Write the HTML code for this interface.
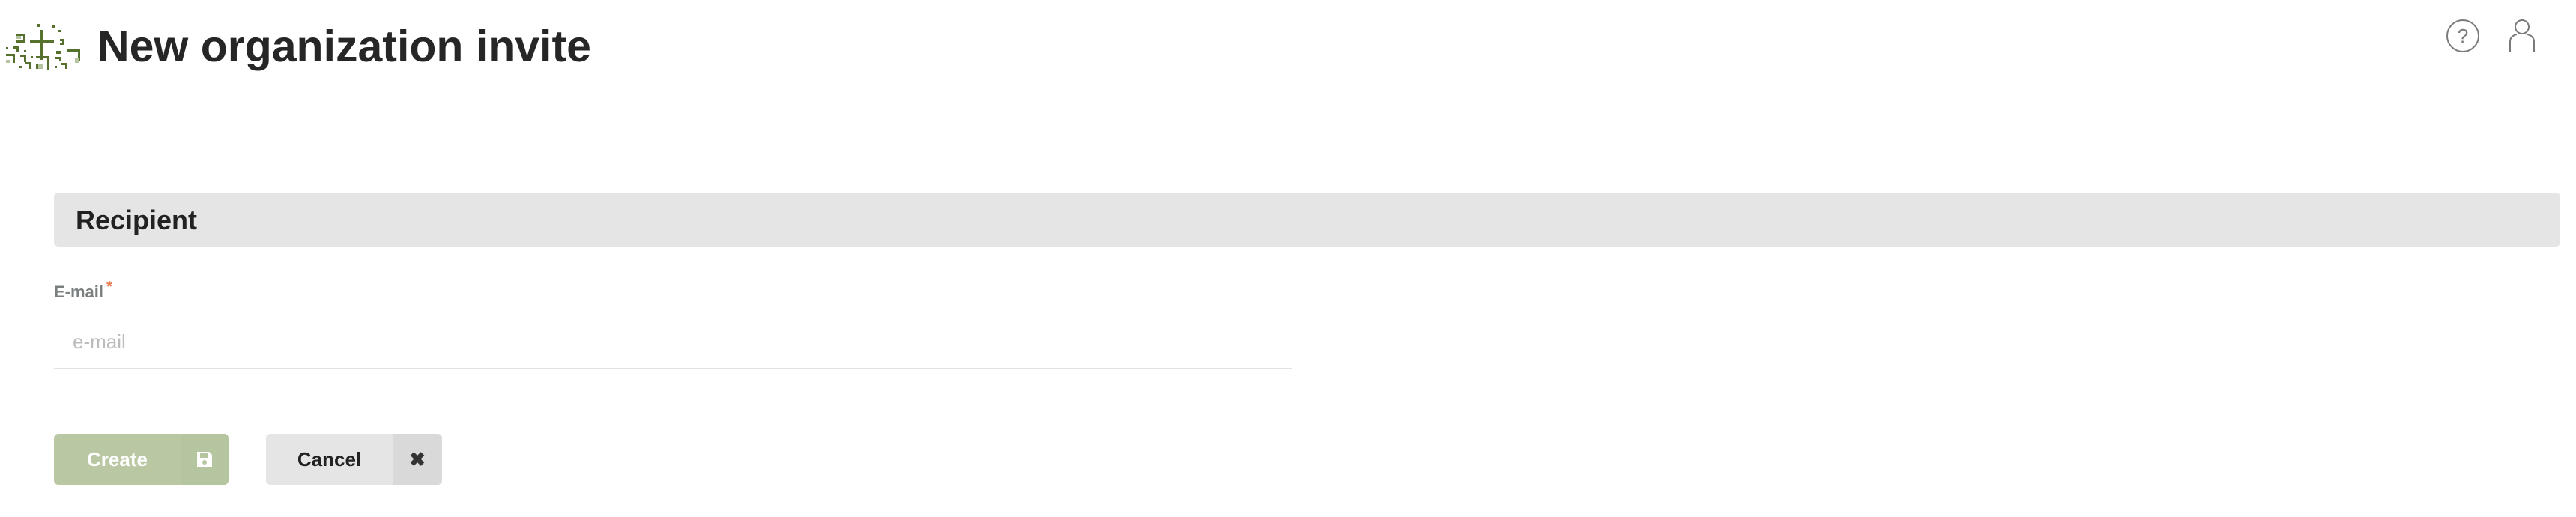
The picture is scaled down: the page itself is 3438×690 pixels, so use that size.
<!DOCTYPE html>
<html><head><meta charset="utf-8"><style>
html,body{margin:0;padding:0;background:#fff;width:3438px;height:690px;overflow:hidden;font-family:"Liberation Sans",sans-serif;}
.t{position:absolute;left:130px;top:28px;font-size:59px;font-weight:bold;color:#262626;letter-spacing:0;}
.bar{position:absolute;left:72px;top:257px;width:3345px;height:72px;background:#e5e5e5;border-radius:6px;}
.bar span{position:absolute;left:29px;top:16px;font-size:36px;font-weight:bold;color:#222;}
.lbl{position:absolute;left:72px;top:377px;font-size:22px;font-weight:bold;color:#7a7f7f;}
.lbl b{color:#e8794a;font-size:20px;position:relative;top:-8px;left:4px;}
.ph{position:absolute;left:97px;top:441px;font-size:26px;color:#bcbcbc;}
.ul{position:absolute;left:72px;top:491px;width:1652px;height:2px;background:#e2e2e2;}
.btn{position:absolute;top:579px;height:68px;border-radius:6px;overflow:hidden;font-size:26px;font-weight:bold;}
.btn .l{position:absolute;left:0;top:0;bottom:0;display:flex;align-items:center;justify-content:center;}
.btn .r{position:absolute;top:0;bottom:0;right:0;display:flex;align-items:center;justify-content:center;}
</style></head><body>
<svg style="position:absolute;left:0;top:20px" width="120" height="80" viewBox="0 0 120 80" fill="#56702e">
<rect x="53" y="20" width="4" height="40"/><rect x="40" y="33" width="32" height="4"/>
<rect x="50" y="12" width="4" height="4"/><rect x="70" y="14" width="3" height="3"/><rect x="78" y="20" width="3" height="3"/>
<path d="M22 25h12v12h-12v-3h9v-6h-9z"/><path d="M80 32h6v8h-6v-3h3v-2h-3z"/>
<rect x="8" y="43" width="3" height="3"/><path d="M17 42h8v8h-3v-5h-5z"/><rect x="32" y="47" width="3" height="3"/>
<path d="M8 52h12v12h-3v-9h-9z"/><path d="M27 53h8v10h-3v-7h-5z"/><rect x="41" y="55" width="3" height="3"/>
<path d="M48 55h18v18h-3v-15h-15z"/><path d="M75 48h6v4h-6z"/><path d="M74 56h8v6h-3v-3h-5z"/>
<path d="M89 46h18v16h-3v-13h-15z"/><path d="M82 64h8v8h-3v-5h-5z"/><path d="M33 63h9v9h-3v-6h-6z"/>
<rect x="26" y="68" width="3" height="3"/><rect x="73" y="68" width="3" height="3"/><rect x="48" y="66" width="3" height="6"/>
<g fill="#b7c4a4"><rect x="8" y="60" width="6" height="4"/><rect x="22" y="28" width="6" height="4"/><rect x="100" y="58" width="6" height="6"/><rect x="51" y="66" width="6" height="6"/></g>
</svg>
<div class="t">New organization invite</div>
<svg style="position:absolute;left:3264px;top:25px" width="46" height="46" viewBox="0 0 46 46"><circle cx="23" cy="23" r="21" fill="none" stroke="#7a7a7a" stroke-width="2"/><text x="23" y="32" font-size="26" text-anchor="middle" fill="#7a7a7a" font-family="Liberation Sans">?</text></svg>
<svg style="position:absolute;left:3348px;top:24px" width="36" height="48" viewBox="0 0 36 48"><circle cx="18" cy="12" r="9" fill="none" stroke="#7a7a7a" stroke-width="2"/><path d="M2 46V32q0-8 9-10M34 46V32q0-8-9-10" fill="none" stroke="#7a7a7a" stroke-width="2"/></svg>
<div class="bar"><span>Recipient</span></div>
<div class="lbl">E-mail<b>*</b></div>
<div class="ph">e-mail</div>
<div class="ul"></div>
<div class="btn" style="left:72px;width:233px;background:#b9c8a3;color:#fff">
<div class="l" style="width:169px">Create</div>
<div class="r" style="width:64px;background:#b5c59f"><svg width="22" height="22" viewBox="0 0 22 22"><path d="M1 1h16l4 4v16H1z" fill="#fff"/><rect x="5" y="3" width="10" height="6" fill="#b5c59f"/><circle cx="11" cy="15" r="3" fill="#b5c59f"/></svg></div></div>
<div class="btn" style="left:355px;width:235px;background:#e5e5e5;color:#222">
<div class="l" style="width:169px">Cancel</div>
<div class="r" style="width:66px;background:#d9d9d9;font-size:26px;color:#333">✖</div></div>
</body></html>
